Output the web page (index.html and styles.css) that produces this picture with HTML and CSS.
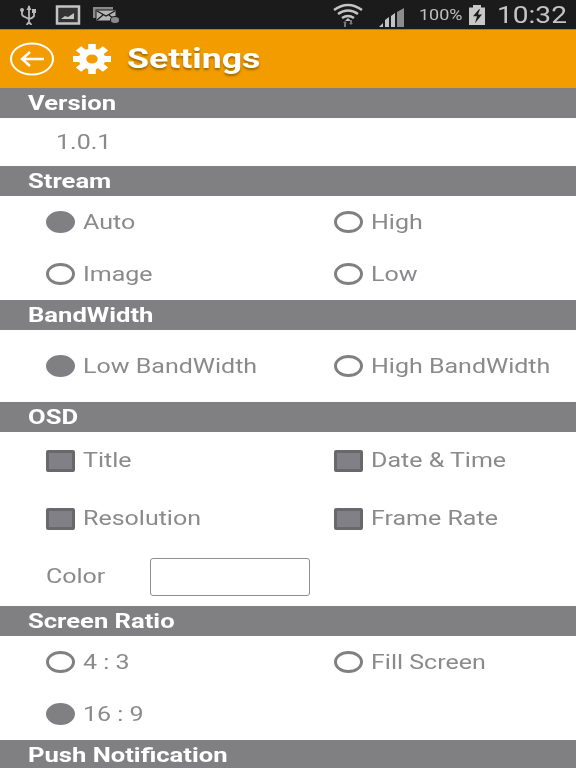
FILE: index.html
```html
<!DOCTYPE html>
<html lang="en">
<head>
    <meta charset="UTF-8">
    <meta name="viewport" content="width=device-width, initial-scale=1.0">
    <title>Settings</title>
    <link rel="stylesheet" href="styles.css">
</head>
<body>
    <div class="status">
        <div class="status-left">
            <svg class="ic" width="18" height="20" viewBox="0 0 18 20"><path d="M9 1v17M9 18a2 2 0 1 0 .01 0M2 6v3q0 2 3 3l4 2q4-1 5-3V7" fill="none" stroke="#b9b9b9" stroke-width="1.8"/><rect x="12" y="4" width="4" height="4" fill="#b9b9b9"/><circle cx="2" cy="5" r="2" fill="#b9b9b9"/><path d="M6.500 5 9 0l2.500 5z" fill="#b9b9b9"/></svg>
            <svg class="ic pic" width="26" height="20" viewBox="0 0 26 20"><rect x="2" y="1.500" width="22" height="17" fill="#333" stroke="#c4c4c4" stroke-width="2.500"/><path d="M6 14l4-3 3 1 6-4v6z" fill="#c4c4c4"/></svg>
            <svg class="ic mail" width="28" height="18" viewBox="0 0 28 18"><rect x="1" y="1" width="20" height="11" fill="#8a8a8a"/><rect x="4" y="4" width="20" height="11" fill="#b5b5b5" stroke="#1b1b1b"/><path d="M5 5l9 5 9-5M5 14l6-5M23 14l-6-5" fill="none" stroke="#1b1b1b" stroke-width="1.300"/><ellipse cx="23" cy="14" rx="4.500" ry="3.500" fill="#8a8a8a" stroke="#1b1b1b"/></svg>
        </div>
        <div class="status-right">
            <svg class="ic wifi" width="30" height="24" viewBox="0 0 30 24"><path d="M1 7Q15-3 29 7M5 11q10-7 20 0M9 15q6-4 12 0" fill="none" stroke="#c4c4c4" stroke-width="2.400"/><path d="M12 18l3-3 3 3z" fill="#c4c4c4"/><path d="M10 20l2-2 2 2zM16 20l2 2 2-2z" fill="#777"/><rect x="11" y="20" width="2" height="4" fill="#777"/><rect x="17" y="17" width="2" height="4" fill="#777"/></svg>
            <svg class="ic signal" width="28" height="20" viewBox="0 0 28 20"><path d="M1 19l4-4v4zM7 19v-7l4-3v10zM13 19V8l4-3v14z" fill="#c4c4c4"/><path d="M19 19V4l7-4v19z" fill="#8c8c8c"/></svg>
            <div class="pct"><span>100%</span></div>
            <svg class="ic batt" width="18" height="21" viewBox="0 0 18 24" preserveAspectRatio="none"><path d="M5 1h8v3h4v20H1V4h4z" fill="#c8c8c8"/><path d="M11 6L5 14h4l-2 8 7-10h-4l2-6z" fill="#1b1b1b"/></svg>
            <div class="clock"><span>10:32</span></div>
        </div>
    </div>

    <div class="appbar">
        <svg class="back" width="46" height="34" viewBox="0 0 46 34"><ellipse cx="23" cy="17" rx="21" ry="15.500" fill="none" stroke="#fff" stroke-width="2"/><path d="M35 17H13M21 10l-8 7 8 7" fill="none" stroke="#fff" stroke-width="2.400"/></svg>
        <svg class="gear" width="38" height="30" viewBox="-19 -15 38 30">
            <g transform="scale(1.27 1)" fill="#fff">
                <circle r="10.500"/>
                <rect x="-3" y="-15" width="6" height="7"/>
                <rect x="-3" y="-15" width="6" height="7" transform="rotate(45)"/>
                <rect x="-3" y="-15" width="6" height="7" transform="rotate(90)"/>
                <rect x="-3" y="-15" width="6" height="7" transform="rotate(135)"/>
                <rect x="-3" y="-15" width="6" height="7" transform="rotate(180)"/>
                <rect x="-3" y="-15" width="6" height="7" transform="rotate(225)"/>
                <rect x="-3" y="-15" width="6" height="7" transform="rotate(270)"/>
                <rect x="-3" y="-15" width="6" height="7" transform="rotate(315)"/>
                <circle r="4.500" fill="#f39c00"/>
            </g>
        </svg>
        <span class="title">Settings</span>
    </div>

    <div class="head"><span>Version</span></div>
    <div class="version"><span class="txt">1.0.1</span></div>

    <div class="head"><span>Stream</span></div>
    <div class="opts">
        <div class="opt"><i class="radio on"></i><span class="txt">Auto</span></div>
        <div class="opt"><i class="radio"></i><span class="txt">High</span></div>
        <div class="opt"><i class="radio"></i><span class="txt">Image</span></div>
        <div class="opt"><i class="radio"></i><span class="txt">Low</span></div>
    </div>

    <div class="head"><span>BandWidth</span></div>
    <div class="opts bw">
        <div class="opt"><i class="radio on"></i><span class="txt">Low BandWidth</span></div>
        <div class="opt"><i class="radio"></i><span class="txt">High BandWidth</span></div>
    </div>

    <div class="head"><span>OSD</span></div>
    <div class="opts osd">
        <div class="opt"><i class="check"></i><span class="txt">Title</span></div>
        <div class="opt"><i class="check"></i><span class="txt">Date &amp; Time</span></div>
        <div class="opt"><i class="check"></i><span class="txt">Resolution</span></div>
        <div class="opt"><i class="check"></i><span class="txt">Frame Rate</span></div>
        <div class="opt color-row"><div class="color-label"><span class="txt">Color</span></div><div class="color-box"></div></div>
    </div>

    <div class="head"><span>Screen Ratio</span></div>
    <div class="opts">
        <div class="opt"><i class="radio"></i><span class="txt">4 : 3</span></div>
        <div class="opt"><i class="radio"></i><span class="txt">Fill Screen</span></div>
        <div class="opt"><i class="radio on"></i><span class="txt">16 : 9</span></div>
    </div>

    <div class="head"><span>Push Notification</span></div>
</body>
</html>
```

FILE: styles.css
```css
html, body {
    height: 768px;
    overflow: hidden;
}
body {
    margin: 0;
    background: #fff;
    font-family: Roboto, "Liberation Sans", sans-serif;
    color: #8a8a8c;
}
.status {
    height: 29px;
    background: #1b1b1b;
    border-bottom: 1px solid #b87a08;
    display: flex;
    justify-content: space-between;
    align-items: center;
    filter: blur(0.5px);
}
.status-left {
    display: flex;
    align-items: center;
    padding-left: 20px;
}
.status-right {
    display: flex;
    align-items: center;
    padding-right: 10px;
}
.ic {
    display: block;
}
.pic {
    margin-left: 17px;
}
.mail {
    margin-left: 11px;
}
.signal {
    margin-left: 15px;
    margin-top: 6px;
}
.pct {
    width: 43px;
    margin-left: 13px;
    font-size: 15px;
    color: #c0c0c0;
}
.pct span {
    display: inline-block;
    transform: scaleX(1.2);
    transform-origin: left;
}
.batt {
    margin-left: 6px;
}
.clock {
    width: 69px;
    margin-left: 11px;
    font-size: 24px;
    color: #c4c4c4;
}
.clock span {
    display: inline-block;
    transform: scaleX(1.17);
    transform-origin: left;
}
.appbar {
    height: 58px;
    background: #f39c00;
    display: flex;
    align-items: center;
    padding-left: 9px;
    filter: blur(0.4px);
}
.gear {
    margin-left: 18px;
}
.title {
    margin-left: 16px;
    font-size: 27px;
    font-weight: 700;
    color: #fff;
    text-shadow: 0 2px 2px rgba(90, 60, 0, 0.55);
    transform: scaleX(1.32);
    transform-origin: left;
}
.head {
    height: 30px;
    background: #808083;
    color: #fff;
    font-size: 20px;
    font-weight: 700;
    line-height: 30px;
    padding-left: 28px;
    filter: blur(0.4px);
}
.head span {
    display: inline-block;
    transform: scaleX(1.28);
    transform-origin: left;
}
.version {
    height: 48px;
    display: flex;
    align-items: center;
    padding-left: 56px;
}
.txt {
    display: inline-block;
    font-size: 20px;
    transform: scaleX(1.25);
    transform-origin: left;
    filter: blur(0.5px);
}
.osd .txt {
    margin-bottom: 2px;
}
.opts {
    display: grid;
    grid-template-columns: 288px 288px;
    grid-auto-rows: 52px;
}
.opts.bw {
    grid-auto-rows: 72px;
}
.opts.osd {
    grid-auto-rows: 58px;
}
.opt {
    display: flex;
    align-items: center;
    padding-left: 46px;
}
.color-row {
    grid-column: 1 / -1;
}
.radio {
    box-sizing: border-box;
    width: 29px;
    height: 22px;
    margin-right: 8px;
    border: 3px solid #808083;
    border-radius: 50%;
    filter: blur(0.4px);
}
.radio.on {
    background: #808083;
}
.check {
    box-sizing: border-box;
    width: 29px;
    height: 22px;
    margin-right: 8px;
    background: #808086;
    border: 3px solid #69696b;
    border-radius: 2px;
    filter: blur(0.4px);
}
.color-label {
    width: 104px;
}
.color-box {
    box-sizing: border-box;
    width: 160px;
    height: 38px;
    background: #fff;
    border: 1px solid #8f8f8f;
    border-radius: 3px;
}
```
